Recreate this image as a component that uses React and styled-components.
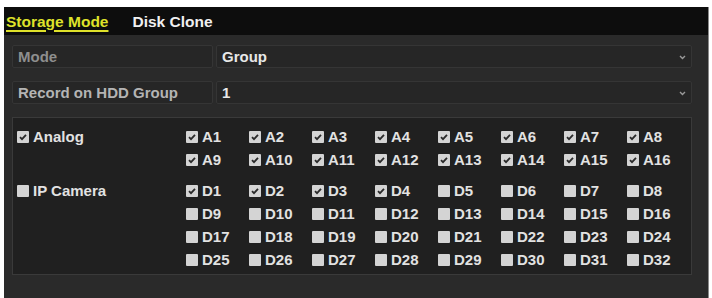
import React from "react";
import styled, { createGlobalStyle } from "styled-components";

const Global = createGlobalStyle`
  html, body { margin: 0; padding: 0; background: #ffffff; }
  body { font-family: "Liberation Sans", Arial, sans-serif; }
`;

const Page = styled.div`
  padding: 7px 4px 0 4px;
`;

const Panel = styled.div`
  height: 291px;
  background: #2a2a2a;
  display: flex;
  flex-direction: column;
  box-shadow: 1px 0 0 #8a8a8a;
`;

const TabBar = styled.div`
  height: 28px;
  background: #0d0d0d;
  display: flex;
  align-items: center;
  gap: 24px;
  padding-left: 2px;
`;

const Tab = styled.div`
  font-size: 15.5px;
  font-weight: bold;
  color: ${(p) => (p.$active ? "#dfe22a" : "#f0f0f0")};
  text-decoration: ${(p) => (p.$active ? "underline" : "none")};
  text-underline-offset: 3px;
  text-decoration-thickness: 2px;
  padding-top: 1px;
`;

const Content = styled.div`
  padding: 10px 16px 0 8px;
  display: flex;
  flex-direction: column;
  gap: 13px;
`;

const FieldRow = styled.div`
  display: grid;
  grid-template-columns: 201px 1fr;
  gap: 3px;
  height: 23px;
`;

const Cell = styled.div`
  background: #262626;
  border: 1px solid #353535;
  border-radius: 2px;
  display: flex;
  align-items: center;
  padding: 0 5px;
  font-size: 15px;
  font-weight: bold;
  color: ${(p) => p.$color || "#e8e8e8"};
  position: relative;
`;

const Chevron = styled.svg`
  position: absolute;
  right: 5px;
  top: 9px;
`;

const Box = styled.div`
  height: 158px;
  box-sizing: border-box;
  background: #202020;
  border: 1px solid #3a3a3a;
  padding: 7px 4px 0 4px;
  display: flex;
  flex-direction: column;
  gap: 8px;
`;

const Group = styled.div`
  display: grid;
  grid-template-columns: 169px repeat(8, 63px);
  grid-auto-rows: 23px;
`;

const GroupLabel = styled.div`
  grid-row: 1;
  grid-column: 1;
`;

const Item = styled.label`
  display: flex;
  align-items: center;
  gap: 4px;
  font-size: 15px;
  font-weight: bold;
  color: #e2e2e2;
  white-space: nowrap;
  height: 23px;
`;

const Square = styled.span`
  width: 12px;
  height: 12px;
  background: #d4d4d4;
  border-radius: 1px;
  display: inline-flex;
  align-items: center;
  justify-content: center;
  flex: none;
`;

const Check = ({ on }) => (
  <Square>
    {on && (
      <svg width="10" height="10" viewBox="0 0 10 10">
        <path d="M2 5.2 L4 7.2 L8 2.8" fill="none" stroke="#2a2a2a" strokeWidth="1.8" />
      </svg>
    )}
  </Square>
);

const CheckItem = ({ on, label }) => (
  <Item>
    <Check on={on} />
    {label}
  </Item>
);

const analog = Array.from({ length: 16 }, (_, i) => `A${i + 1}`);
const ip = Array.from({ length: 32 }, (_, i) => `D${i + 1}`);

const ChannelGroup = ({ title, titleOn, items, isOn }) => (
  <Group>
    <GroupLabel>
      <CheckItem on={titleOn} label={title} />
    </GroupLabel>
    {items.map((name, i) => (
      <div
        key={name}
        style={{ gridRow: Math.floor(i / 8) + 1, gridColumn: (i % 8) + 2 }}
      >
        <CheckItem on={isOn(i)} label={name} />
      </div>
    ))}
  </Group>
);

export default function App() {
  return (
    <>
      <Global />
      <Page>
        <Panel>
          <TabBar>
            <Tab $active>Storage Mode</Tab>
            <Tab>Disk Clone</Tab>
          </TabBar>
          <Content>
            <FieldRow>
              <Cell $color="#8e8e8e">Mode</Cell>
              <Cell>
                Group
                <Chevron width="7" height="5" viewBox="0 0 7 5">
                  <path d="M1 1 L3.5 3.5 L6 1" fill="none" stroke="#9a9a9a" strokeWidth="1.4" />
                </Chevron>
              </Cell>
            </FieldRow>
            <FieldRow>
              <Cell $color="#b4b4b4">Record on HDD Group</Cell>
              <Cell>
                1
                <Chevron width="7" height="5" viewBox="0 0 7 5">
                  <path d="M1 1 L3.5 3.5 L6 1" fill="none" stroke="#9a9a9a" strokeWidth="1.4" />
                </Chevron>
              </Cell>
            </FieldRow>
            <Box>
              <ChannelGroup title="Analog" titleOn items={analog} isOn={() => true} />
              <ChannelGroup title="IP Camera" titleOn={false} items={ip} isOn={(i) => i < 4} />
            </Box>
          </Content>
        </Panel>
      </Page>
    </>
  );
}
